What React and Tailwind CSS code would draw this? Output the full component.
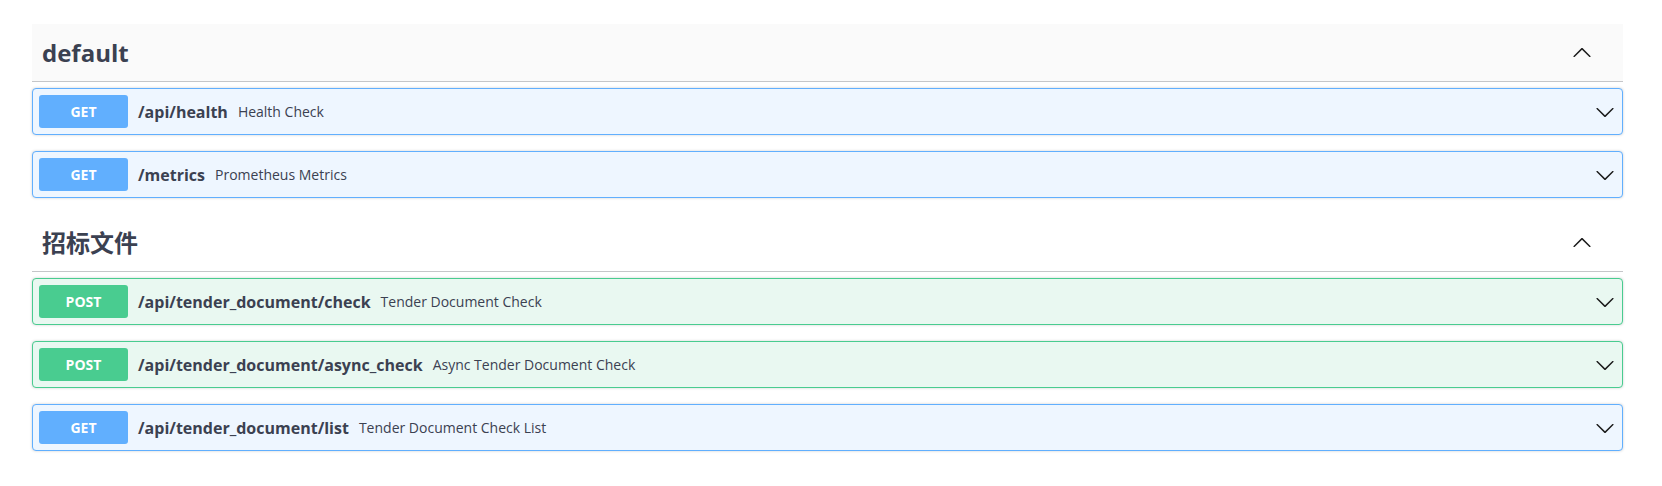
const ops = {
  default: [
    { method: 'GET', path: '/api/health', summary: 'Health Check' },
    { method: 'GET', path: '/metrics', summary: 'Prometheus Metrics' },
  ],
  tender: [
    { method: 'POST', path: '/api/tender_document/check', summary: 'Tender Document Check' },
    { method: 'POST', path: '/api/tender_document/async_check', summary: 'Async Tender Document Check' },
    { method: 'GET', path: '/api/tender_document/list', summary: 'Tender Document Check List' },
  ],
};

const Arrow = ({ up }) => (
  <svg
    width="20"
    height="20"
    viewBox="0 0 20 20"
    className={up ? 'rotate-180' : ''}
    fill="#1a1a1a"
  >
    <path d="M17.418 6.109c.272-.268.709-.268.979 0s.271.701 0 .969l-7.908 7.83c-.27.268-.707.268-.979 0l-7.908-7.83c-.27-.268-.27-.701 0-.969.271-.268.709-.268.979 0L10 13.25l7.418-7.141z" />
  </svg>
);

const TagHeader = ({ title, hovered }) => (
  <div
    className={`flex items-center h-[58px] pl-[10px] pr-[31px] border-b border-[#c5c6c9] mb-[6px] ${hovered ? 'bg-[#fafafa]' : ''}`}
  >
    <h3 className="flex-1 text-[24px] font-bold text-[#3b4151]">{title}</h3>
    <Arrow up />
  </div>
);

const Operation = ({ method, path, summary }) => {
  const isGet = method === 'GET';
  return (
    <div
      className={`flex items-center h-[47px] mb-[16px] pl-[6px] pr-[7px] rounded-[4px] border shadow-[0_0_3px_rgba(0,0,0,0.19)] ${isGet ? 'bg-[#eef6ff] border-[#61affe]' : 'bg-[#e9f8f1] border-[#49cc90]'}`}
    >
      <span
        className={`w-[89px] h-[33px] flex items-center justify-center rounded-[3px] text-white text-[14px] font-bold ${isGet ? 'bg-[#61affe]' : 'bg-[#49cc90]'}`}
      >
        {method}
      </span>
      <span className="px-[10px] text-[16px] font-bold text-[#3b4151]">{path}</span>
      <span className="flex-1 text-[14px] text-[#3b4151]">{summary}</span>
      <Arrow />
    </div>
  );
};

export default function App() {
  return (
    <div
      className="bg-white w-[1662px] h-[486px] pt-[24px] pl-[32px] pr-[39px]"
      style={{ fontFamily: '"Open Sans", "Noto Sans CJK SC", sans-serif' }}
    >
      <TagHeader title="default" hovered />
      {ops.default.map((op) => (
        <Operation key={op.path} {...op} />
      ))}
      <TagHeader title="招标文件" />
      {ops.tender.map((op) => (
        <Operation key={op.path} {...op} />
      ))}
    </div>
  );
}
